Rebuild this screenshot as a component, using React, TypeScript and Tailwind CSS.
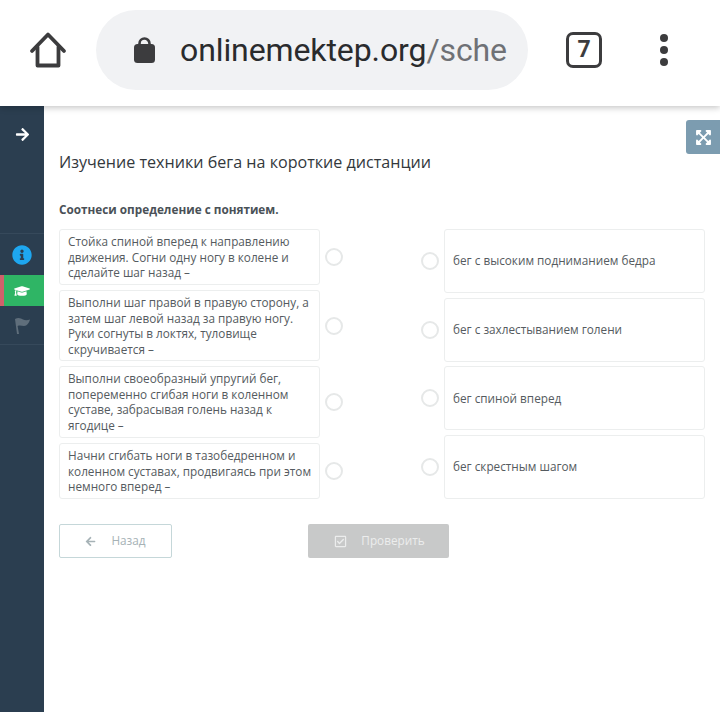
import { FaArrowLeft, FaArrowRight, FaExpandArrowsAlt, FaGraduationCap, FaInfoCircle, FaRegCheckSquare } from "react-icons/fa";

const prompts = [
  { h: "h-[56px]", text: "Стойка спиной вперед к направлению движения. Согни одну ногу в колене и сделайте шаг назад –" },
  { h: "h-[71px]", text: "Выполни шаг правой в правую сторону, а затем шаг левой назад за правую ногу. Руки согнуты в локтях, туловище скручивается –" },
  { h: "h-[72px]", text: "Выполни своеобразный упругий бег, попеременно сгибая ноги в коленном суставе, забрасывая голень назад к ягодице –" },
  { h: "h-[56px]", text: "Начни сгибать ноги в тазобедренном и коленном суставах, продвигаясь при этом немного вперед –" },
];

const answers = [
  "бег с высоким подниманием бедра",
  "бег с захлестыванием голени",
  "бег спиной вперед",
  "бег скрестным шагом",
];

function Radio() {
  return <span className="block h-[18px] w-[18px] shrink-0 rounded-full border-2 border-[#e6e8e8] bg-white" />;
}

function BrowserBar() {
  return (
    <header className="relative z-10 flex h-[106px] items-center bg-white pb-[6px] shadow-[0_2px_6px_rgba(0,0,0,0.22)]">
      <div className="flex w-[96px] justify-center">
        <svg width="38" height="38" viewBox="0 0 38 38" fill="none" stroke="#3c3c3e" strokeWidth="3.8" strokeLinecap="round" strokeLinejoin="round" className="mr-[1px]">
          <path d="M3 20 19 3.500 35 20" />
          <path d="M8.500 16V34.500H29.500V16" />
        </svg>
      </div>
      <div className="flex h-[80px] w-[432px] items-center rounded-full bg-[#f1f2f4] pl-[38px]">
        <svg width="21" height="26" viewBox="0 0 21 26" className="mb-[1px]">
          <path d="M5.500 9V6.500a5 5 0 0 1 10 0V9" fill="none" stroke="#3c3c3e" strokeWidth="2.600" />
          <rect x="0" y="7" width="21" height="19" rx="3.500" fill="#3c3c3e" />
        </svg>
        <div className="ml-[25px] whitespace-nowrap font-['Roboto',sans-serif] text-[32px] leading-none tracking-[-0.1px] text-[#2a2b2d]">
          onlinemektep.org<span className="text-[#6f7175]">/sche</span>
        </div>
      </div>
      <div className="ml-[38px] flex h-[36px] w-[36px] items-center justify-center rounded-[7px] border-[3.5px] border-[#3c3c3e] font-['Roboto',sans-serif] text-[23px] font-bold text-[#3c3c3e]">
        7
      </div>
      <div className="ml-[58px] flex flex-col gap-[4px]">
        <span className="h-[8px] w-[8px] rounded-full bg-[#3c3c3e]" />
        <span className="h-[8px] w-[8px] rounded-full bg-[#3c3c3e]" />
        <span className="h-[8px] w-[8px] rounded-full bg-[#3c3c3e]" />
      </div>
    </header>
  );
}

function Sidebar() {
  return (
    <aside className="flex w-[44px] shrink-0 flex-col bg-[#2b3e50]">
      <div className="flex h-[128px] items-start justify-center border-b border-[#36495b] pt-[21px] text-white">
        <FaArrowRight size={15} />
      </div>
      <div className="flex h-[41px] items-center justify-center pt-[1px] text-[#1ea7f0]">
        <FaInfoCircle size={20} />
      </div>
      <div className="flex h-[31px] items-center bg-[#2fb565]">
        <span className="h-full w-[4px] bg-[#d0616b]" />
        <span className="flex flex-1 justify-center pr-[4px] text-white">
          <FaGraduationCap size={16} />
        </span>
      </div>
      <div className="flex h-[39px] items-center justify-center border-b border-[#36495b]">
        <svg width="16" height="17" viewBox="0 0 16 17" fill="#5f6e7b">
          <path d="M1 2C4 0 7 1 9 2.500 11 3.500 13.500 3.500 16 2.500 15 6 13 9 10 9 8 9 6 8 3.600 9L5 17H3Z" />
        </svg>
      </div>
    </aside>
  );
}

export default function App() {
  return (
    <div className="flex h-[712px] w-[720px] flex-col overflow-hidden bg-white font-['Open_Sans',sans-serif]">
      <BrowserBar />
      <div className="flex min-h-0 flex-1">
        <Sidebar />
        <main className="relative flex-1 pl-[15px] pr-[15px] pt-[45px]">
          <button className="absolute right-0 top-[14px] flex h-[34px] w-[34px] items-center justify-center rounded-l-[3px] bg-[#7c9cb0] text-white">
            <FaExpandArrowsAlt size={17} />
          </button>
          <h1 className="text-[16.1px] leading-[22px] text-[#33383c]">Изучение техники бега на короткие дистанции</h1>
          <p className="mt-[27px] text-[11.75px] font-bold leading-[18px] text-[#4a5157]">Соотнеси определение с понятием.</p>
          <div className="mt-[11px] flex justify-between">
            <div className="flex w-[284px] flex-col gap-[5px]">
              {prompts.map((p) => (
                <div key={p.text} className="flex items-center">
                  <div className={`${p.h} w-[261px] shrink-0 rounded-[3px] border border-[#eceeee] py-[4px] pl-[8px] pr-[4px] text-[11.75px] leading-[15.7px] text-[#555b60]`}>
                    {p.text}
                  </div>
                  <span className="ml-[5px]"><Radio /></span>
                </div>
              ))}
            </div>
            <div className="flex w-[284px] flex-col justify-between">
              {answers.map((a) => (
                <div key={a} className="flex items-center">
                  <Radio />
                  <div className="ml-[5px] flex h-[64px] w-[261px] shrink-0 items-center rounded-[3px] border border-[#eceeee] px-[8px] text-[11.75px] text-[#555b60]">
                    {a}
                  </div>
                </div>
              ))}
            </div>
          </div>
          <div className="mt-[25px] flex items-center">
            <button className="flex h-[34px] w-[113px] items-center justify-center gap-[15px] rounded-[2px] border border-[#c5d7d9] text-[11.75px] text-[#a6b2b6]">
              <FaArrowLeft size={11} />
              Назад
            </button>
            <button className="ml-[136px] flex h-[34px] w-[141px] items-center justify-center gap-[14px] rounded-[2px] bg-[#c8c9c9] pl-[2px] text-[11.75px] text-[#eceded]">
              <FaRegCheckSquare size={13} />
              Проверить
            </button>
          </div>
        </main>
      </div>
    </div>
  );
}
